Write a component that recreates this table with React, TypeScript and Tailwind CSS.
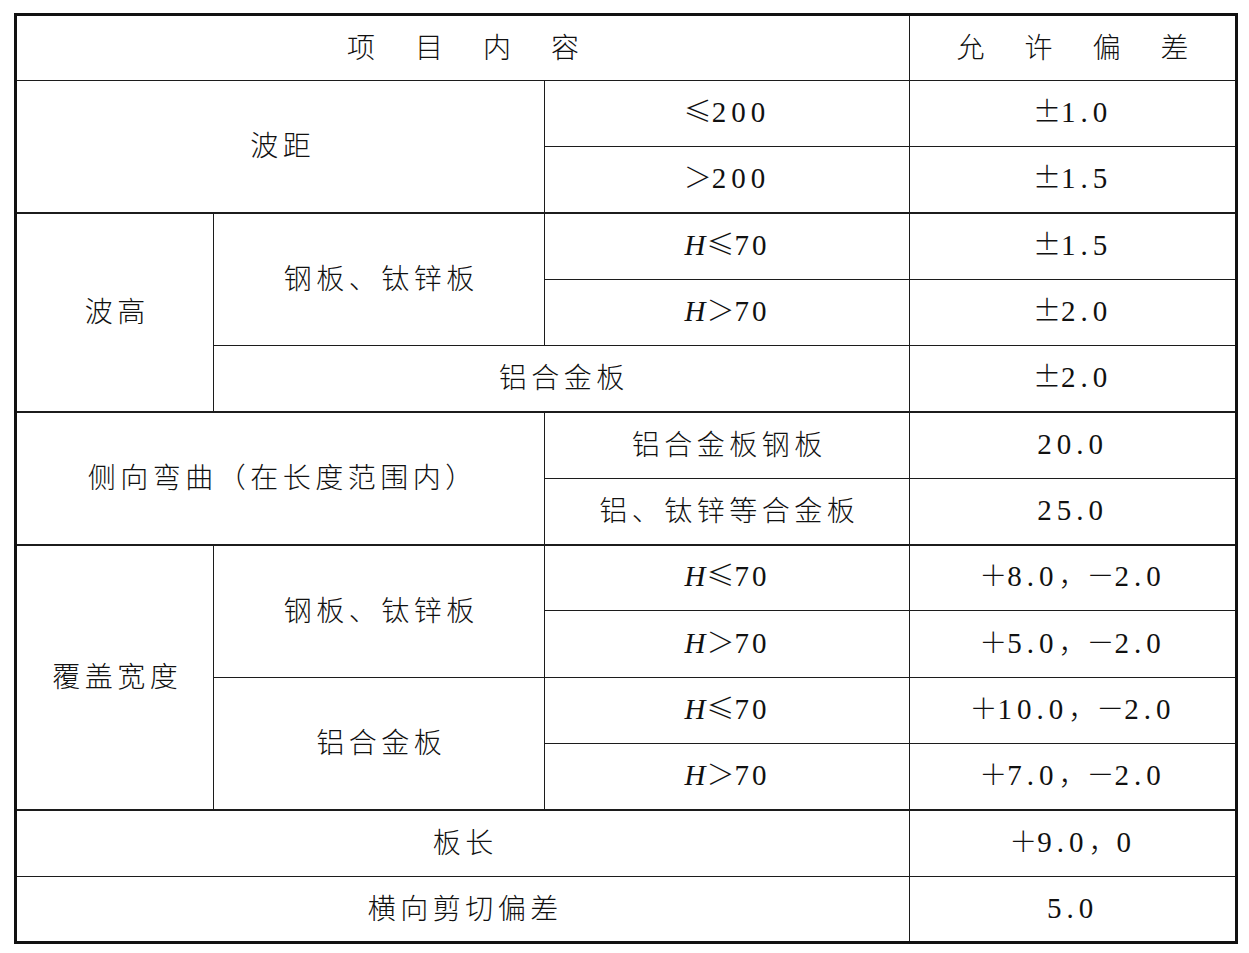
const cjk = { fontFamily: '"Noto Sans CJK SC", sans-serif' };
const serif = { fontFamily: '"Liberation Serif", "Times New Roman", serif' };

const Cell = ({
  children,
  rowSpan,
  colSpan,
  thick,
}: {
  children?: React.ReactNode;
  rowSpan?: number;
  colSpan?: number;
  thick?: boolean;
}) => (
  <td
    rowSpan={rowSpan}
    colSpan={colSpan}
    className={`border-[1.5px] border-[#1c1c1c] text-center align-middle p-0 pb-[4px] ${thick ? "border-t-[2.5px]" : ""}`}
  >
    {children}
  </td>
);

const T = ({ s }: { s: string }) => (
  <span className="tracking-[4.5px] pl-[4.5px]">{s}</span>
);

// numbers in a serif face, with full-width symbols from the CJK face
const Num = ({ parts }: { parts: (string | [string])[] }) => (
  <span>
    {parts.map((p, i) =>
      typeof p === "string" ? (
        <span key={i} style={serif} className="font-normal tracking-[5px] text-[29px]">
          {p}
        </span>
      ) : (
        <span key={i} className="font-light">
          {p[0]}
        </span>
      )
    )}
  </span>
);

const HV = ({ op }: { op: string }) => (
  <span>
    <span style={serif} className="italic font-normal text-[29px] pr-[1px]">H</span>
    <span className="font-light">{op}</span>
    <span style={serif} className="font-normal tracking-[3px] text-[29px]">70</span>
  </span>
);

const Spread = ({ chars }: { chars: string[] }) => (
  <div className="flex justify-center gap-[40px]">
    {chars.map((c) => (
      <span key={c}>{c}</span>
    ))}
  </div>
);

export default function App() {
  return (
    <div className="min-h-screen bg-white pt-[13px] pl-[14px] text-[#111]" style={cjk}>
      <table className="border-collapse border-[3px] border-[#111] w-[1221px] table-fixed text-[28px] leading-none font-light">
        <colgroup>
          <col className="w-[198px]" />
          <col className="w-[331px]" />
          <col className="w-[365px]" />
          <col className="w-[327px]" />
        </colgroup>
        <tbody>
          <tr className="h-[66px]">
            <Cell colSpan={3}>
              <Spread chars={["项", "目", "内", "容"]} />
            </Cell>
            <Cell>
              <Spread chars={["允", "许", "偏", "差"]} />
            </Cell>
          </tr>
          <tr className="h-[66px]">
            <Cell colSpan={2} rowSpan={2}>
              <T s="波距" />
            </Cell>
            <Cell>
              <Num parts={[["≤"], "200"]} />
            </Cell>
            <Cell>
              <Num parts={[["±"], "1.0"]} />
            </Cell>
          </tr>
          <tr className="h-[66px]">
            <Cell>
              <Num parts={[["＞"], "200"]} />
            </Cell>
            <Cell>
              <Num parts={[["±"], "1.5"]} />
            </Cell>
          </tr>
          <tr className="h-[67px]">
            <Cell rowSpan={3} thick>
              <T s="波高" />
            </Cell>
            <Cell rowSpan={2} thick>
              <T s="钢板、钛锌板" />
            </Cell>
            <Cell thick>
              <HV op="≤" />
            </Cell>
            <Cell thick>
              <Num parts={[["±"], "1.5"]} />
            </Cell>
          </tr>
          <tr className="h-[66px]">
            <Cell>
              <HV op="＞" />
            </Cell>
            <Cell>
              <Num parts={[["±"], "2.0"]} />
            </Cell>
          </tr>
          <tr className="h-[66px]">
            <Cell colSpan={2}>
              <T s="铝合金板" />
            </Cell>
            <Cell>
              <Num parts={[["±"], "2.0"]} />
            </Cell>
          </tr>
          <tr className="h-[67px]">
            <Cell colSpan={2} rowSpan={2} thick>
              <T s="侧向弯曲（在长度范围内）" />
            </Cell>
            <Cell thick>
              <T s="铝合金板钢板" />
            </Cell>
            <Cell thick>
              <Num parts={["20.0"]} />
            </Cell>
          </tr>
          <tr className="h-[66px]">
            <Cell>
              <T s="铝、钛锌等合金板" />
            </Cell>
            <Cell>
              <Num parts={["25.0"]} />
            </Cell>
          </tr>
          <tr className="h-[66px]">
            <Cell rowSpan={4} thick>
              <T s="覆盖宽度" />
            </Cell>
            <Cell rowSpan={2} thick>
              <T s="钢板、钛锌板" />
            </Cell>
            <Cell thick>
              <HV op="≤" />
            </Cell>
            <Cell thick>
              <Num parts={[["＋"], "8.0", ["，"], ["－"], "2.0"]} />
            </Cell>
          </tr>
          <tr className="h-[67px]">
            <Cell>
              <HV op="＞" />
            </Cell>
            <Cell>
              <Num parts={[["＋"], "5.0", ["，"], ["－"], "2.0"]} />
            </Cell>
          </tr>
          <tr className="h-[66px]">
            <Cell rowSpan={2}>
              <T s="铝合金板" />
            </Cell>
            <Cell>
              <HV op="≤" />
            </Cell>
            <Cell>
              <Num parts={[["＋"], "10.0", ["，"], ["－"], "2.0"]} />
            </Cell>
          </tr>
          <tr className="h-[66px]">
            <Cell>
              <HV op="＞" />
            </Cell>
            <Cell>
              <Num parts={[["＋"], "7.0", ["，"], ["－"], "2.0"]} />
            </Cell>
          </tr>
          <tr className="h-[67px]">
            <Cell colSpan={3} thick>
              <T s="板长" />
            </Cell>
            <Cell thick>
              <Num parts={[["＋"], "9.0", ["，"], "0"]} />
            </Cell>
          </tr>
          <tr className="h-[66px]">
            <Cell colSpan={3}>
              <T s="横向剪切偏差" />
            </Cell>
            <Cell>
              <Num parts={["5.0"]} />
            </Cell>
          </tr>
        </tbody>
      </table>
    </div>
  );
}
